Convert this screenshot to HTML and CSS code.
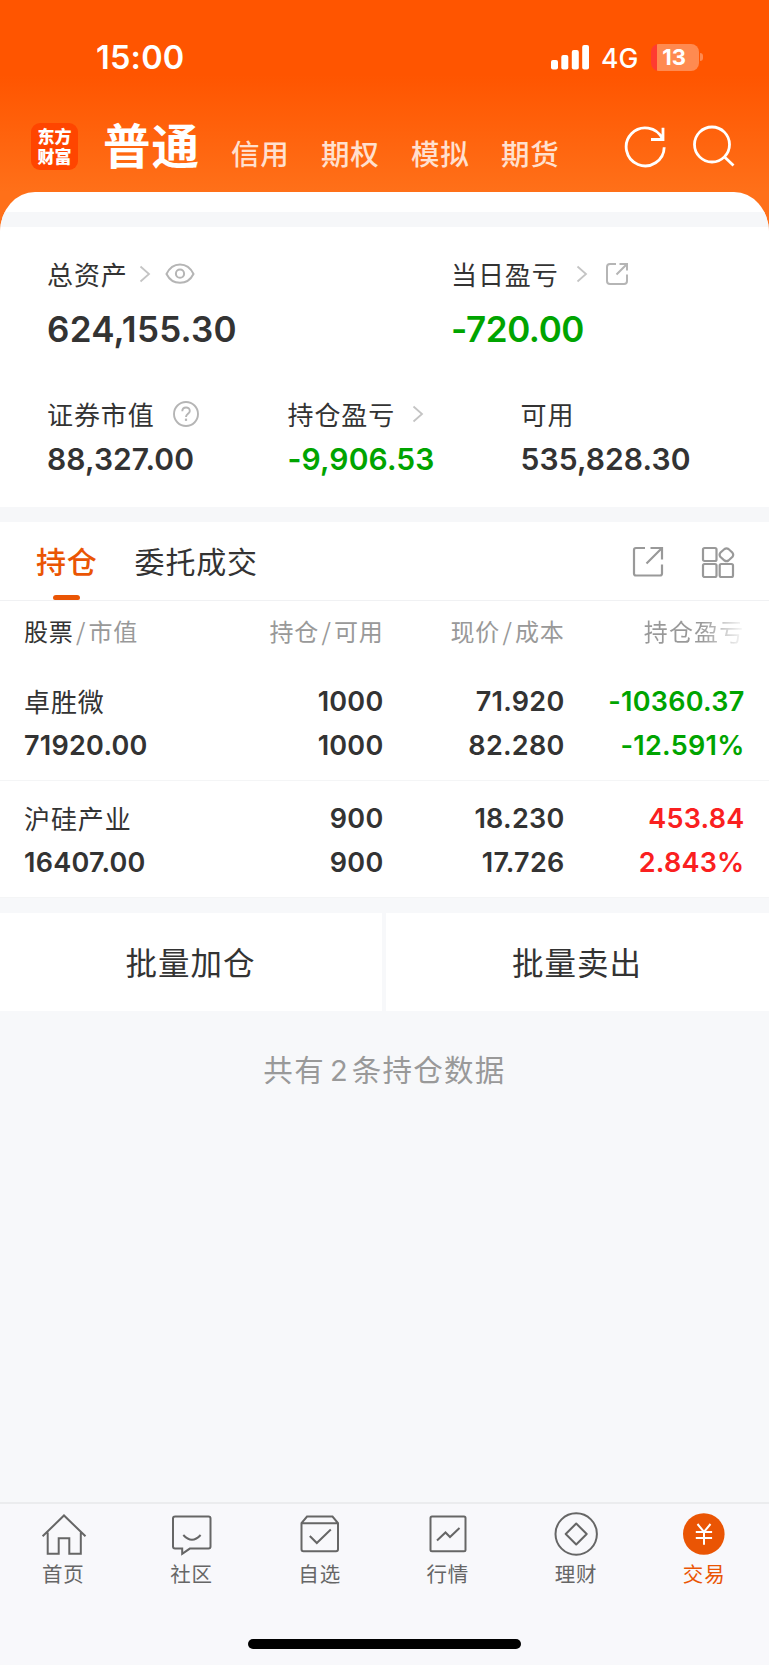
FILE: index.html
```html
<!DOCTYPE html>
<html lang="zh-CN">
<head>
<meta charset="utf-8">
<title>普通交易</title>
<link rel="stylesheet" href="styles.css">
</head>
<body>
<div class="app">
  <header class="header">
    <div class="status">
      <span class="status-time">15:00</span>
      <svg class="signal" width="38" height="25" viewBox="0 0 38 25" fill="#fff"><rect x="0" y="15" width="7" height="9.5" rx="2"/><rect x="10.3" y="10" width="7" height="14.5" rx="2"/><rect x="20.8" y="5" width="7" height="19.5" rx="2"/><rect x="31.2" y="0" width="6.8" height="24.5" rx="2"/></svg>
      <span class="status-net">4G</span>
      <span class="battery"><span class="battery-num">13</span></span>
      <span class="battery-cap"></span>
    </div>
    <nav class="nav">
      <div class="logo"><span>东方</span><span>财富</span></div>
      <span class="nav-main">普通</span>
      <span class="nav-item">信用</span>
      <span class="nav-item">期权</span>
      <span class="nav-item">模拟</span>
      <span class="nav-item">期货</span>
      <svg class="nav-refresh" width="44" height="44" viewBox="0 0 44 44" fill="none" stroke="#fff" stroke-width="2.8"><path d="M41.2 23.2A19 19 0 1 1 39.4 14.8M40 3.8v11.700H28"/></svg>
      <svg class="nav-search" width="44" height="44" viewBox="0 0 44 44" fill="none" stroke="#fff" stroke-width="2.8"><circle cx="20" cy="20.5" r="17.5"/><path d="M32.300 32.800l9.200 8.800"/></svg>
    </nav>
  </header>

  <main class="panel">
    <div class="strip"></div>
    <section class="summary">
      <div class="totals">
        <div>
          <div class="label"><span>总资产</span>
            <svg class="chev chev-near" width="12" height="18" viewBox="0 0 12 18"><path d="M1.5 1.5l8.5 7.5-8.5 7.5"/></svg>
            <svg class="eye" width="30" height="22" viewBox="0 0 30 22" fill="none" stroke="#b5b5b5" stroke-width="2"><path d="M1.5 11C7.5-1.7 22.5-1.7 28.5 11 22.5 22.8 7.5 22.8 1.5 11z"/><circle cx="15" cy="10.7" r="4.1"/></svg>
          </div>
          <div class="big">624,155.30</div>
        </div>
        <div>
          <div class="label"><span>当日盈亏</span>
            <svg class="chev" width="12" height="18" viewBox="0 0 12 18"><path d="M1.5 1.5l8.5 7.5-8.5 7.5"/></svg>
            <svg class="share-sm" width="24" height="24" viewBox="0 0 24 24" fill="none" stroke="#b5b5b5" stroke-width="2"><path d="M11 2H5Q2 2 2 5v14q0 3 3 3h14q3 0 3-3v-6.500M14.500 2H22v6.500M22 2L11.500 12.500"/></svg>
          </div>
          <div class="big big-tight down">-720.00</div>
        </div>
      </div>
      <div class="parts">
        <div>
          <div class="label"><span>证券市值</span>
            <svg class="help" width="26" height="26" viewBox="0 0 26 26" fill="none" stroke="#b5b5b5" stroke-width="1.9"><circle cx="13" cy="13" r="12"/><path d="M9.300 10.200C9.300 5.300 16.800 5.400 16.800 9.900c0 2.800-3.800 3-3.800 6.100"/><path d="M13 17.600v2.300" stroke-width="2.2"/></svg>
          </div>
          <div class="mid">88,327.00</div>
        </div>
        <div>
          <div class="label"><span>持仓盈亏</span>
            <svg class="chev" width="12" height="18" viewBox="0 0 12 18"><path d="M1.5 1.5l8.5 7.5-8.5 7.5"/></svg>
          </div>
          <div class="mid down">-9,906.53</div>
        </div>
        <div>
          <div class="label"><span>可用</span></div>
          <div class="mid">535,828.30</div>
        </div>
      </div>
    </section>

    <div class="strip"></div>

    <section class="holdings">
      <div class="tabs">
        <span class="tab tab-on">持仓</span>
        <span class="tab">委托成交</span>
        <svg class="tabs-share" width="32" height="32" viewBox="0 0 32 32" fill="none" stroke="#999" stroke-width="2.2"><path d="M13 2H4Q2 2 2 4v23.500q0 2 2 2h24q2 0 2-2V18.500M18.500 2H30v11.500M30 2L14.500 17.500"/></svg>
        <svg class="tabs-grid" width="34" height="32" viewBox="0 0 34 32" fill="none" stroke="#999" stroke-width="2.2"><rect x="2" y="2" width="13.5" height="13" rx="1.5"/><rect x="2" y="18" width="13.5" height="13" rx="1.5"/><rect x="18.7" y="18" width="13.3" height="13" rx="1.5"/><path d="M23.500 3q2-1.300 4 0l4 3.800q1.400 2 0 4l-4 3.700q-2 1.300-4 0l-4.200-3.700q-1.400-2 0-4z"/></svg>
      </div>
      <div class="grid-row head">
        <span><b>股票</b><i>/</i>市值</span>
        <span>持仓<i>/</i>可用</span>
        <span>现价<i>/</i>成本</span>
        <span class="fade">持仓盈亏</span>
      </div>
      <div class="grid-row row">
        <span class="name">卓胜微</span><span>1000</span><span>71.920</span><span class="down">-10360.37</span>
        <span>71920.00</span><span>1000</span><span>82.280</span><span class="down">-12.591%</span>
      </div>
      <div class="grid-row row">
        <span class="name">沪硅产业</span><span>900</span><span>18.230</span><span class="up">453.84</span>
        <span>16407.00</span><span>900</span><span>17.726</span><span class="up">2.843%</span>
      </div>
    </section>

    <div class="actions"><div>批量加仓</div><div>批量卖出</div></div>
    <p class="count">共有<i>2</i>条持仓数据</p>
  </main>

  <footer class="tabbar">
    <div class="tabbar-items">
      <div class="item"><svg width="48" height="46" viewBox="0 0 48 46"><path d="M2.6 24.3L24 3.500l21.500 20.800M7.700 20.500v21.200h11V26.300h10.600v15.400h11.500V20.500"/></svg><span>首页</span></div>
      <div class="item"><svg width="48" height="46" viewBox="0 0 48 46"><path d="M6.500 4.600h34q2 0 2 2v28q0 2-2 2H21.800l-7.600 5.200v-5.200H7q-2 0-2-2v-28q0-2 2-2M15.300 23q8.700 9.500 17.300 0"/></svg><span>社区</span></div>
      <div class="item"><svg width="48" height="46" viewBox="0 0 48 46"><path d="M5.500 11.200L11 4.600h25.500l5.500 6.600v26q0 2-2 2H7.500q-2 0-2-2zM5.500 11.200H42M13.800 24l7 7 14-13.500"/></svg><span>自选</span></div>
      <div class="item"><svg width="48" height="46" viewBox="0 0 48 46"><rect x="5.5" y="4.6" width="35" height="34.6" rx="1.5"/><path d="M12 28.500l8.500-8 4.500 4.500 9.500-9"/></svg><span>行情</span></div>
      <div class="item"><svg width="48" height="46" viewBox="0 0 48 46"><circle cx="23.2" cy="22" r="20.7"/><path d="M23.200 11.500L33.700 22 23.200 32.500 12.700 22z" stroke-linejoin="round"/></svg><span>理财</span></div>
      <div class="item item-on"><svg width="48" height="46" viewBox="0 0 48 46"><circle cx="22.8" cy="22" r="20.8"/><path d="M16.500 12l6.500 8 6.500-8M23 20v12.700M14.800 20h16.300M14.800 26h16.300"/></svg><span>交易</span></div>
    </div>
    <div class="home-bar"></div>
  </footer>
</div>
</body>
</html>
```

FILE: styles.css
```css
* { box-sizing: border-box; }
body {
  margin: 0;
  font-family: "Noto Sans CJK SC", sans-serif;
  color: #333;
}
i, b { font-style: normal; font-weight: 400; }
svg { display: block; flex: none; }

.app {
  width: 769px;
  height: 1665px;
  display: flex;
  flex-direction: column;
  background: #f7f8fa linear-gradient(#ff5500 0, #ff5500 75px, #ff7019 192px, #ff7019 240px) no-repeat 0 0 / 100% 240px;
}

/* header */
.header { height: 192px; color: #fff; }
.status {
  height: 114px;
  display: flex;
  align-items: center;
  padding-left: 96px;
  font-family: Inter, sans-serif;
}
.status-time { width: 455px; padding-top: 2px; font-size: 32.5px; font-weight: 600; line-height: 40px; letter-spacing: .2px; }
.signal { margin-right: 12px; }
.status-net { width: 50px; padding-top: 2px; font-size: 26.5px; font-weight: 500; line-height: 40px; }
.battery {
  width: 48px;
  height: 27px;
  border-radius: 8px;
  background: linear-gradient(90deg, #ff3b30 6px, #ff8a50 6px);
  text-align: center;
}
.battery-num { display: block; margin-left: -2px; font-size: 22px; font-weight: 700; line-height: 27px; }
.battery-cap { width: 3px; height: 8px; margin-left: 1px; border-radius: 0 3px 3px 0; background: #ff8a50; }

.nav { display: flex; align-items: flex-start; padding-left: 31px; height: 78px; }
.logo {
  width: 47px;
  height: 47px;
  margin: 9px 25px 0 0;
  padding-top: 3px;
  border-radius: 9px;
  background: #ff4500;
  font-size: 17px;
  font-weight: 900;
  line-height: 19.5px;
  text-align: center;
}
.logo span { display: block; }
.nav-main { width: 128px; font-size: 47.5px; font-weight: 700; line-height: 59px; letter-spacing: 1px; }
.nav-item { width: 90px; padding-top: 18.5px; font-size: 28.5px; font-weight: 500; line-height: 40px; letter-spacing: .8px; color: #ffe0cf; }
.nav-refresh { margin: 10px 0 0 32px; }
.nav-search { margin: 10px 0 0 25px; }

/* account panel */
.panel {
  flex: 1;
  border-radius: 35px 35px 0 0 / 40px 40px 0 0;
  overflow: hidden;
  padding-top: 20px;
  background: linear-gradient(#fff 20px, #f7f8fa 20px);
}
.strip { height: 15px; background: #f6f7f9; }
.summary { height: 280px; padding: 29px 0 0 47px; background: #fff; }
.totals { display: grid; grid-template-columns: 404px 1fr; }
.parts { display: grid; grid-template-columns: 240.5px 233px 1fr; margin-top: 47px; }
.label { display: flex; align-items: center; height: 36px; font-size: 26px; line-height: 36px; letter-spacing: .9px; }
.parts .label + .mid { margin-top: 9px; }
.chev { margin-left: 17px; fill: none; stroke: #c4c4c4; stroke-width: 1.8; }
.chev-near { margin-left: 11px; }
.eye { margin-left: 14px; }
.share-sm { margin-left: 17px; }
.help { margin-left: 18px; }
.big { margin-top: 17px; font: 600 35px/40px Inter, sans-serif; letter-spacing: .25px; }
.big-tight { letter-spacing: -.4px; }
.mid { font: 600 30px/36px Inter, sans-serif; letter-spacing: .1px; }
.down { color: #00a400; }
.up { color: #fa2020; }

/* holdings */
.holdings { background: #fff; }
.tabs { display: flex; height: 79px; padding-left: 36px; border-bottom: 1px solid #f0f1f3; }
.tab { position: relative; margin-right: 37px; font-size: 30px; line-height: 76px; letter-spacing: .8px; }
.tab-on { font-weight: 500; color: #ea5504; }
.tab-on::after { content: ""; position: absolute; left: 17px; bottom: 0; width: 27px; height: 5px; border-radius: 3px 3px 2px 2px; background: #ea5504; }
.tabs-share { margin: 24px 0 0 337px; }
.tabs-grid { margin: 24px 0 0 37px; }

.grid-row { display: grid; grid-template-columns: 199px 160.5px 181px 180px; align-content: start; padding-left: 24px; text-align: right; }
.grid-row > :nth-child(4n + 1) { text-align: left; }
.head { height: 63px; font-size: 24px; line-height: 60px; letter-spacing: .7px; color: #999; }
.head b { color: #333; }
.head i { margin: 0 2.5px; }
.head .fade { letter-spacing: 1.2px; background: linear-gradient(90deg, #999 76%, #f4f4f4 98%); background-clip: text; color: transparent; }
.row { height: 117px; padding-top: 16px; border-bottom: 1px solid #f4f5f6; font: 600 27px/44.4px Inter, sans-serif; letter-spacing: .25px; }
.row .name { font: 400 26px/42px "Noto Sans CJK SC", sans-serif; letter-spacing: .9px; }

.actions { display: grid; grid-template-columns: 382px 1fr; gap: 4px; margin-top: 15px; text-align: center; }
.actions div { height: 98px; padding-right: 1px; background: #fff; font-size: 31.5px; line-height: 96px; letter-spacing: 1px; }
.count { margin: 37px 0 0; font-size: 29.5px; line-height: 40px; letter-spacing: 1.3px; text-align: center; color: #999; }
.count i { margin: 0 4px 0 5px; font-family: Inter, sans-serif; font-size: 29px; letter-spacing: 0; }

/* bottom bar */
.tabbar { height: 163px; border-top: 2px solid #ebecee; background: #f8f8fb; }
.tabbar-items { display: grid; grid-template-columns: repeat(6, 1fr); padding-top: 8px; }
.item { display: flex; flex-direction: column; align-items: center; font-size: 20.5px; line-height: 30px; letter-spacing: .8px; color: #666; }
.item svg { fill: none; stroke: #666; stroke-width: 2; }
.item span { margin-right: 1.5px; }
.item-on { color: #ea5504; }
.item-on svg circle { fill: #ea5504; stroke: none; }
.item-on svg path { stroke: #fff; stroke-width: 2; }
.home-bar { width: 273px; height: 10px; margin: 51px auto 0; border-radius: 5px; background: #000; }
```
